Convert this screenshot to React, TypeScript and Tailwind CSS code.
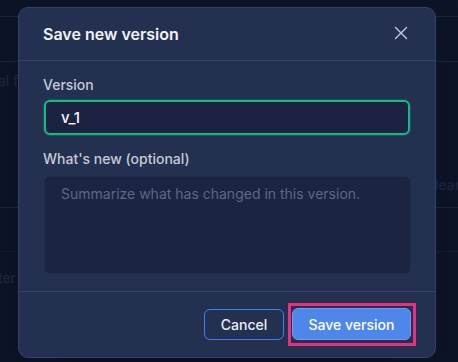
import React from "react";

const SaveVersionDialog: React.FC = () => {
  return (
    <div className="absolute left-[18px] top-[7px] w-[418px] rounded-[10px] border border-[#34426a] bg-[#243050] shadow-2xl">
      <div className="flex h-[53px] items-center justify-between border-b border-[#35436a] pl-6 pr-[26px]">
        <h2 className="text-[16px] font-semibold text-[#f1f4f9]">Save new version</h2>
        <button className="-mt-[3px] text-[#c3cada]">
          <svg width="16" height="16" viewBox="0 0 16 16" fill="none" stroke="currentColor" strokeWidth="1.4" strokeLinecap="round">
            <path d="M2.5 2.5l11 11M13.5 2.5l-11 11" />
          </svg>
        </button>
      </div>

      <div className="flex flex-col px-6 pt-[14px] pb-[17px]">
        <label className="text-[14px] leading-5 font-medium text-[#c4cad8]">Version</label>
        <div className="mt-[4px] rounded-[7px] bg-[#1e4f5a] p-[1px]">
          <input
            defaultValue="v_1"
            className="h-[35px] w-full rounded-[6px] border-2 border-[#17b888] bg-[#1b2340] px-[15px] text-[15px] font-medium text-[#f3f5f9] outline-none"
          />
        </div>

        <label className="mt-[13px] text-[14px] leading-5 font-medium text-[#c4cad8]">What's new (optional)</label>
        <textarea
          placeholder="Summarize what has changed in this version."
          className="mt-[7px] ml-[1px] h-[98px] w-[367px] resize-none rounded-[6px] border border-[#222c48] bg-[#1b2440] px-4 pt-[6px] text-[14px] leading-[21px] text-[#e5e7eb] placeholder:text-[#5d6887] outline-none"
        />
      </div>

      <div className="flex items-center justify-end gap-[8px] border-t border-[#35436a] pt-4 pb-[17px] pr-6">
        <button className="h-[31px] w-[80px] rounded-[6px] border border-[#3b7ff0] text-[14px] font-medium text-[#e9edf5]">
          Cancel
        </button>
        <button className="relative h-[32px] w-[119px] rounded-[6px] border border-[#6e9cf2] bg-[#4f86e9] text-[14px] font-medium text-white">
          Save version
          <span className="pointer-events-none absolute -left-[5px] -right-[6px] -top-[6px] -bottom-[7px] border-[3px] border-[#e8307c]" />
        </button>
      </div>
    </div>
  );
};

const App: React.FC = () => {
  return (
    <div
      className="relative h-[362px] w-[458px] overflow-hidden bg-[#0d1428]"
      style={{ fontFamily: "Inter, 'Noto Sans', sans-serif" }}
    >
      <div className="flex flex-col text-[14px] text-[#1e2945]">
        <div className="h-[17px] border-b border-[#142a3a]" />
        <div className="h-[45px] border-b border-[#142a3a]" />
        <div className="flex h-[146px] items-start justify-between border-b border-[#142a3a] pt-[8px]">
          <span className="-ml-[2px]">al f</span>
          <span className="mt-[104px] -mr-[2px]">lear</span>
        </div>
        <div className="h-[44px] border-b border-[#121d33]" />
        <div className="pt-[15px]">
          <span className="-ml-[2px]">ter</span>
        </div>
      </div>
      <SaveVersionDialog />
    </div>
  );
};

export default App;
